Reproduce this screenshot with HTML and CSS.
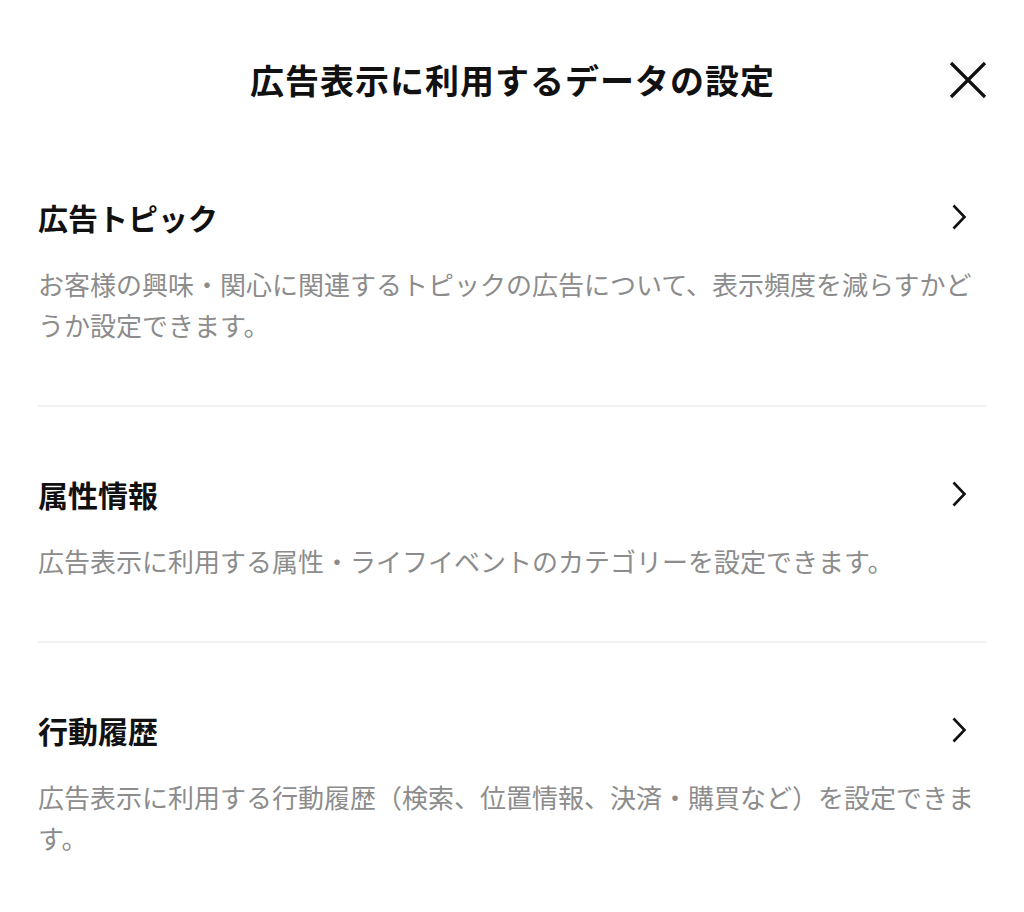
FILE: index.html
```html
<!DOCTYPE html>
<html lang="ja">
<head>
<meta charset="utf-8">
<title>広告表示に利用するデータの設定</title>
<link rel="stylesheet" href="styles.css">
</head>
<body>
<div class="page">
  <header class="header">
    <h1 class="title">広告表示に利用するデータの設定</h1>
    <button class="close" aria-label="閉じる">
      <svg width="38" height="38" viewBox="0 0 38 38"><path d="M2 2 L36 36 M36 2 L2 36" stroke="#111" stroke-width="3.2" fill="none"/></svg>
    </button>
  </header>
  <section class="item">
    <div class="item-head">
      <h2 class="item-title">広告トピック</h2>
      <svg class="chev" width="16" height="26" viewBox="0 0 16 26"><path d="M2.5 1.5 L13.5 13 L2.5 24.5" stroke="#111" stroke-width="2.6" fill="none"/></svg>
    </div>
    <p class="item-desc">お客様の興味・関心に関連するトピックの広告について、表示頻度を減らすかどうか設定できます。</p>
  </section>
  <section class="item">
    <div class="item-head">
      <h2 class="item-title">属性情報</h2>
      <svg class="chev" width="16" height="26" viewBox="0 0 16 26"><path d="M2.5 1.5 L13.5 13 L2.5 24.5" stroke="#111" stroke-width="2.6" fill="none"/></svg>
    </div>
    <p class="item-desc">広告表示に利用する属性・ライフイベントのカテゴリーを設定できます。</p>
  </section>
  <section class="item last">
    <div class="item-head">
      <h2 class="item-title">行動履歴</h2>
      <svg class="chev" width="16" height="26" viewBox="0 0 16 26"><path d="M2.5 1.5 L13.5 13 L2.5 24.5" stroke="#111" stroke-width="2.6" fill="none"/></svg>
    </div>
    <p class="item-desc">広告表示に利用する行動履歴（検索、位置情報、決済・購買など）を設定できます。</p>
  </section>
</div>
</body>
</html>
```

FILE: styles.css
```css
* { box-sizing: border-box; }
html, body { margin: 0; padding: 0; background: #fff; }
body {
  font-family: "Noto Sans CJK JP", "Noto Sans", sans-serif;
  color: #111;
}
.page {
  width: 1024px;
  padding: 0 37px 0 38px;
}
.header {
  position: relative;
  height: 130px;
  padding-top: 55px;
  display: flex;
  justify-content: center;
}
.title {
  margin: 0;
  font-size: 34px;
  line-height: 50px;
  font-weight: 700;
  letter-spacing: 1px;
  color: #111;
}
.close {
  position: absolute;
  right: 0;
  top: 61px;
  width: 38px;
  height: 38px;
  padding: 0;
  border: 0;
  background: none;
  display: flex;
}
.item {
  padding: 67px 0 60px;
  border-bottom: 2px solid #f2f2f2;
}
.item.last { border-bottom: 0; }
.item-head {
  display: flex;
  align-items: center;
  justify-content: space-between;
  height: 40px;
}
.item-title {
  margin: 0;
  font-size: 30px;
  line-height: 40px;
  font-weight: 700;
  color: #111;
}
.chev { margin-right: 20px; }
.item-desc {
  margin: 26px 0 0;
  font-size: 26px;
  line-height: 41px;
  color: #8c8c8c;
  font-weight: 400;
}
```
